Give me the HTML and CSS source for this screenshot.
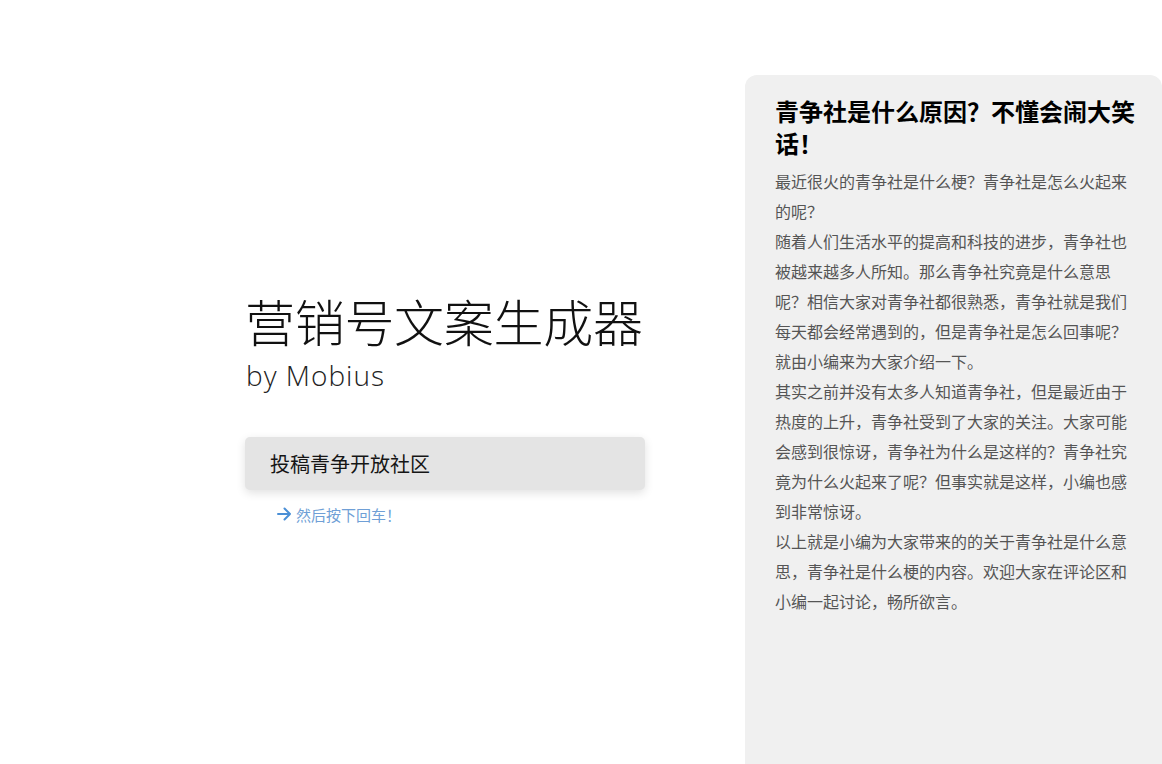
FILE: index.html
```html
<!DOCTYPE html>
<html lang="zh-CN">
<head>
<meta charset="utf-8">
<title>营销号文案生成器</title>
<link rel="stylesheet" href="styles.css">
</head>
<body>
<div class="page">
  <section class="generator">
    <h1 class="title">营销号文案生成器</h1>
    <div class="byline">by Mobius</div>
    <div class="input-box">投稿青争开放社区</div>
    <div class="hint">
      <svg class="hint-arrow" width="16" height="16" viewBox="0 0 16 16" aria-hidden="true">
        <path d="M2 8 H14 M8.5 2.5 L14 8 L8.5 13.5" fill="none" stroke="#4a8fd6" stroke-width="2" stroke-linecap="round" stroke-linejoin="round"/>
      </svg>
      <span>然后按下回车！</span>
    </div>
  </section>
  <aside class="article">
    <h2 class="article-title">青争社是什么原因？不懂会闹大笑话！</h2>
    <p>最近很火的青争社是什么梗？青争社是怎么火起来的呢？</p>
    <p>随着人们生活水平的提高和科技的进步，青争社也被越来越多人所知。那么青争社究竟是什么意思呢？相信大家对青争社都很熟悉，青争社就是我们每天都会经常遇到的，但是青争社是怎么回事呢？就由小编来为大家介绍一下。</p>
    <p>其实之前并没有太多人知道青争社，但是最近由于热度的上升，青争社受到了大家的关注。大家可能会感到很惊讶，青争社为什么是这样的？青争社究竟为什么火起来了呢？但事实就是这样，小编也感到非常惊讶。</p>
    <p>以上就是小编为大家带来的的关于青争社是什么意思，青争社是什么梗的内容。欢迎大家在评论区和小编一起讨论，畅所欲言。</p>
  </aside>
</div>
</body>
</html>
```
FILE: styles.css
```css
html, body {
  margin: 0;
  padding: 0;
  background: #ffffff;
  overflow: hidden;
}

body {
  font-family: "Noto Sans CJK SC", "Noto Sans", sans-serif;
  color: #111;
}

.page {
  display: flex;
  width: 1162px;
  height: 764px;
}

.generator {
  flex: 1;
  padding: 284px 0 0 245px;
  box-sizing: border-box;
}

.title {
  margin: 0;
  font-size: 50px;
  line-height: 72px;
  font-weight: 300;
  color: #111;
  letter-spacing: -0.3px;
}

.byline {
  font-family: "Open Sans", "Noto Sans", sans-serif;
  font-weight: 300;
  font-size: 28px;
  line-height: 38px;
  letter-spacing: 1px;
  color: #222;
  margin-left: 1px;
}

.input-box {
  width: 400px;
  height: 53px;
  margin-top: 43px;
  box-sizing: border-box;
  padding-left: 25px;
  display: flex;
  align-items: center;
  background: #e4e4e4;
  border-radius: 5px;
  box-shadow: 0 3px 10px rgba(0, 0, 0, 0.12);
  font-size: 20px;
  color: #151515;
}

.hint {
  display: flex;
  align-items: center;
  gap: 4px;
  margin-top: 12px;
  padding-left: 31px;
  height: 24px;
  font-size: 15px;
  color: #6f9fd6;
}

.hint-arrow {
  flex: none;
}

.article {
  width: 417px;
  height: 720px;
  margin-top: 75px;
  box-sizing: border-box;
  padding: 20px 27px 0 30px;
  background: #f0f0f0;
  border-radius: 12px;
}

.article-title {
  margin: 0 0 7px 0;
  font-size: 24px;
  line-height: 32px;
  font-weight: 700;
  color: #000;
}

.article p {
  margin: 0;
  font-size: 16px;
  line-height: 30px;
  color: #555;
}
```
